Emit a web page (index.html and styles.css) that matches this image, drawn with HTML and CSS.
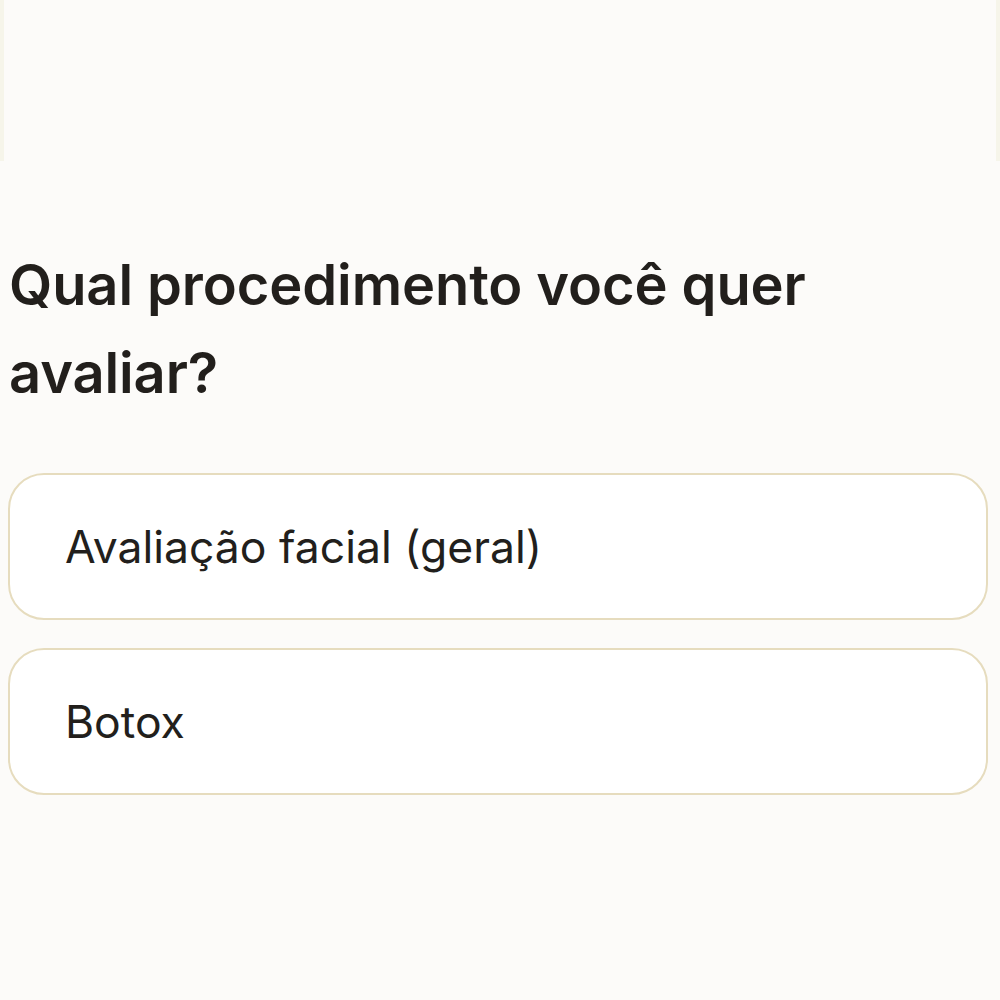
FILE: index.html
```html
<!DOCTYPE html>
<html lang="pt-BR">
<head>
  <meta charset="UTF-8">
  <meta name="viewport" content="width=device-width, initial-scale=1">
  <title>Avaliação</title>
<link rel="stylesheet" href="styles.css">
</head>
<body>

<div class="top-panel"></div>

<div class="quiz">
<h1 class="question">Qual procedimento você quer avaliar?</h1>

<div class="options">
<button class="option">Avaliação facial (geral)</button>
<button class="option">Botox</button>
</div>
</div>

</body>
</html>
```

FILE: styles.css
```css
* {
margin: 0;
padding: 0;
box-sizing: border-box;
font-family: Inter, "Noto Sans", sans-serif;
}
body, html {
width: 100%;
height: 100%;
overflow: hidden;
background: #fcfbf9;
}
.top-panel {
height: 161px;
border-left: 4px solid #f6f5ea;
border-right: 4px solid #f6f5ea;
}
.quiz {
padding: 80px 12px 0 8px;
}
.question {
font-size: 56px;
font-weight: 600;
line-height: 88px;
color: #221f1c;
padding-left: 1px;
letter-spacing: -0.1px;
}
.options {
display: flex;
flex-direction: column;
gap: 28px;
margin-top: 56px;
}
.option {
display: flex;
align-items: center;
height: 147px;
padding-left: 55px;
background: #ffffff;
border: 2px solid #e6dcbe;
border-radius: 36px;
font-size: 44.5px;
font-weight: 400;
color: #221f1c;
text-align: left;
cursor: pointer;
}
```
